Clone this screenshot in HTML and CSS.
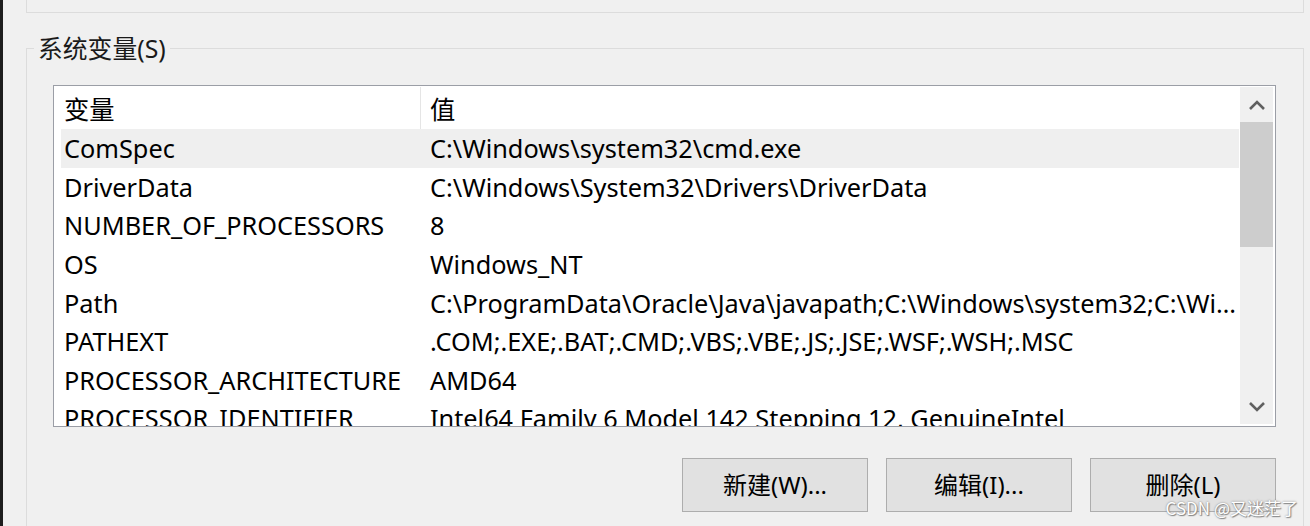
FILE: index.html
```html
<!DOCTYPE html>
<html lang="zh-CN">
<head>
    <meta charset="UTF-8">
    <title>环境变量</title>
    <link rel="stylesheet" href="styles.css">
</head>
<body>
<div class="edge"></div>
<div class="dialog">
    <div class="group-top"></div>

    <fieldset class="group">
        <legend>系统变量(S)</legend>

        <div class="listview">
            <div class="list-main">
                <div class="row head">
                    <div class="col name">变量</div>
                    <div class="col value">值</div>
                </div>
                <div class="row selected">
                    <div class="col name">ComSpec</div>
                    <div class="col value">C:\Windows\system32\cmd.exe</div>
                </div>
                <div class="row">
                    <div class="col name">DriverData</div>
                    <div class="col value">C:\Windows\System32\Drivers\DriverData</div>
                </div>
                <div class="row">
                    <div class="col name">NUMBER_OF_PROCESSORS</div>
                    <div class="col value">8</div>
                </div>
                <div class="row">
                    <div class="col name">OS</div>
                    <div class="col value">Windows_NT</div>
                </div>
                <div class="row">
                    <div class="col name">Path</div>
                    <div class="col value">C:\ProgramData\Oracle\Java\javapath;C:\Windows\system32;C:\Windows;C:\Windows\System32\Wbem</div>
                </div>
                <div class="row">
                    <div class="col name">PATHEXT</div>
                    <div class="col value">.COM;.EXE;.BAT;.CMD;.VBS;.VBE;.JS;.JSE;.WSF;.WSH;.MSC</div>
                </div>
                <div class="row">
                    <div class="col name">PROCESSOR_ARCHITECTURE</div>
                    <div class="col value">AMD64</div>
                </div>
                <div class="row">
                    <div class="col name">PROCESSOR_IDENTIFIER</div>
                    <div class="col value">Intel64 Family 6 Model 142 Stepping 12, GenuineIntel</div>
                </div>
            </div>
            <div class="scrollbar">
                <div class="arrow">
                    <svg width="18" height="10" viewBox="0 0 18 10"><path d="M2 9 L9 2 L16 9" fill="none" stroke="#606060" stroke-width="2.6"/></svg>
                </div>
                <div class="thumb"></div>
                <div class="track"></div>
                <div class="arrow">
                    <svg width="18" height="10" viewBox="0 0 18 10"><path d="M2 1 L9 8 L16 1" fill="none" stroke="#606060" stroke-width="2.6"/></svg>
                </div>
            </div>
        </div>

        <div class="buttons">
            <button type="button">新建(W)...</button>
            <button type="button">编辑(I)...</button>
            <button type="button">删除(L)</button>
        </div>
    </fieldset>
</div>
<div class="watermark">CSDN @又迷茫了</div>
</body>
</html>
```

FILE: styles.css
```css
body {
    margin: 0;
    height: 526px;
    overflow: hidden;
    display: flex;
    background-color: #f0f0f0;
    font-family: "Noto Sans", "Noto Sans CJK SC", sans-serif;
    color: #000;
}

.edge {
    width: 3px;
    background-color: #1e1e1e;
    flex-shrink: 0;
}

.dialog {
    flex: 1;
    min-width: 0;
    display: flex;
    flex-direction: column;
    padding-left: 23px;
    padding-right: 6px;
}

.group-top {
    height: 12px;
    flex-shrink: 0;
    border: 1px solid #dcdcdc;
    border-top: none;
}

.group {
    flex: 1;
    min-height: 0;
    margin: 19px 0 0 0;
    padding: 21px 27px 0 26px;
    border: 1px solid #dcdcdc;
    border-bottom: none;
    min-width: 0;
    overflow: hidden;
}

.group legend {
    font-size: 24.8px;
    line-height: 32px;
    padding: 0 4px;
    margin-left: -19px;
    color: #1a1a1a;
}

.listview {
    display: flex;
    height: 342px;
    border: 1px solid #9b9ea6;
    background: #fff;
    padding: 1px 2px 2px 0;
    box-sizing: border-box;
    overflow: hidden;
}

.list-main {
    flex: 1;
    min-width: 0;
    padding-left: 7px;
    padding-right: 1px;
}

.row {
    display: flex;
    height: 38.6px;
    align-items: center;
    font-size: 25.3px;
    white-space: nowrap;
}

.row.head {
    height: 42px;
}

.row.selected {
    background-color: #efefef;
}

.col {
    overflow: hidden;
    text-overflow: ellipsis;
}

.col.name {
    width: 360px;
    padding-left: 3px;
    box-sizing: border-box;
    flex-shrink: 0;
}

.col.value {
    flex: 1;
    padding-left: 9px;
}

.head .col.name {
    height: 100%;
    display: flex;
    align-items: center;
    border-right: 1px solid #e5e5e5;
    box-sizing: border-box;
}

.scrollbar {
    width: 33px;
    display: flex;
    flex-direction: column;
    background-color: #f0f0f0;
}

.arrow {
    height: 35px;
    display: flex;
    align-items: center;
    justify-content: center;
    flex-shrink: 0;
}

.thumb {
    height: 125px;
    background-color: #cdcdcd;
}

.track {
    flex: 1;
}

.buttons {
    display: flex;
    justify-content: flex-end;
    gap: 18px;
    margin-top: 31px;
}

.buttons button {
    width: 186px;
    height: 54px;
    padding: 0 0 4px;
    background-color: #e1e1e1;
    border: 1px solid #adadad;
    font-family: "Noto Sans", "Noto Sans CJK SC", sans-serif;
    font-size: 24px;
    color: #000;
}

.watermark {
    position: absolute;
    right: 12px;
    bottom: 6px;
    font-family: "Noto Sans CJK SC", sans-serif;
    font-size: 17px;
    color: #fff;
    text-shadow: 0 0 2px #777, 1px 1px 1px #888;
}
```
